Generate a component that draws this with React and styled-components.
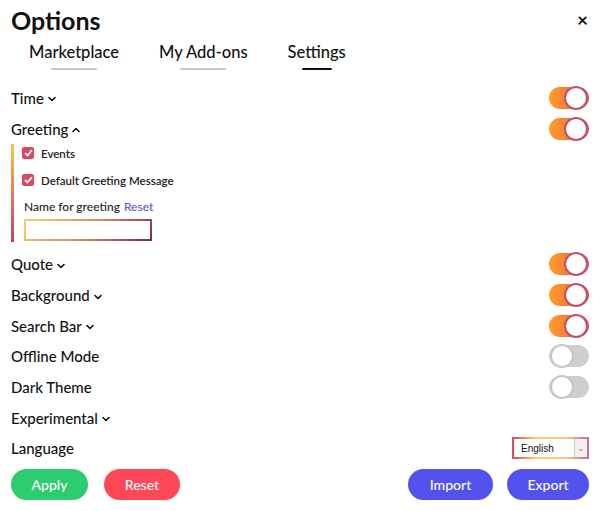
import React from "react";
import styled, { createGlobalStyle } from "styled-components";

const Global = createGlobalStyle`
  html, body { margin: 0; padding: 0; background: #fff; }
  body { font-family: Lato, "Noto Sans", sans-serif; color: #111; }
  * { box-sizing: border-box; }
`;

const Page = styled.div`
  width: 600px;
  height: 511px;
  padding: 0 11px;
  display: flex;
  flex-direction: column;
`;

const Header = styled.div`
  display: flex;
  justify-content: space-between;
  align-items: center;
  height: 38px;
  padding-top: 1px;
`;

const Title = styled.h1`
  margin: 0;
  font-size: 25px;
  font-weight: 700;
`;

const Close = styled.span`
  font-size: 19px;
  font-weight: 700;
  margin-right: 1px;
  line-height: 1;
`;

const Tabs = styled.div`
  display: flex;
  gap: 40px;
  padding-left: 18px;
  height: 44px;
`;

const Tab = styled.div`
  display: flex;
  flex-direction: column;
  align-items: center;
  font-size: 16.5px;
  font-weight: 500;
  padding-top: 4px;
  &::after {
    content: "";
    display: block;
    margin-top: 6px;
    height: 2px;
    border-radius: 1px;
    width: ${(p) => (p.$active ? "30px" : "46px")};
    background: ${(p) => (p.$active ? "#111" : "#c8c8c8")};
  }
`;

const Row = styled.div`
  display: flex;
  align-items: center;
  justify-content: space-between;
  height: ${(p) => p.$h || 31}px;
`;

const Label = styled.div`
  display: flex;
  align-items: center;
  gap: 4px;
  font-size: 15px;
  font-weight: 500;
`;

const Toggle = styled.div`
  width: 40px;
  height: 22px;
  border-radius: 11px;
  padding: 0 1px;
  display: flex;
  align-items: center;
  justify-content: ${(p) => (p.$on ? "flex-end" : "flex-start")};
  background: ${(p) =>
    p.$on ? "linear-gradient(90deg, #ff9d2a, #f1763c 60%, #d05a62)" : "#cfcfcf"};
  &::after {
    content: "";
    width: 20px;
    height: 20px;
    border-radius: 50%;
    background: #fff;
    border: 2px solid ${(p) => (p.$on ? "#c24f6c" : "#c6c6c6")};
  }
`;

const Section = styled.div`
  border-left: 3px solid;
  border-image: linear-gradient(180deg, #f4c84a, #e37d58 50%, #c2416b) 1;
  padding: 0 0 1px 8px;
  margin-bottom: 7px;
  display: flex;
  flex-direction: column;
`;

const CheckRow = styled.label`
  display: flex;
  align-items: center;
  gap: 7px;
  height: 18px;
  margin-bottom: ${(p) => p.$mb || 0}px;
  font-size: 11.5px;
  font-weight: 600;
  color: #222;
`;

const Box = styled.span`
  width: 12px;
  height: 12px;
  border-radius: 2px;
  background: #e0475f;
  display: flex;
  align-items: center;
  justify-content: center;
`;

const FieldLabel = styled.div`
  margin-top: 9px;
  margin-left: 2px;
  font-size: 12px;
  font-weight: 500;
  color: #222;
  height: 16px;
  display: flex;
  align-items: center;
  gap: 4px;
`;

const LinkText = styled.span`
  color: #5b57d6;
`;

const Input = styled.div`
  margin: 5px 0 0 2px;
  width: 128px;
  height: 22px;
  border: 2px solid;
  border-image: linear-gradient(135deg, #f6d070, #d98a66 50%, #7c2a5a) 1;
`;

const Select = styled.div`
  width: 77px;
  height: 22px;
  border: 2px solid;
  border-image: linear-gradient(90deg, #e0475f, #f6d070 30%, #f6d070 70%, #c07090) 1;
  display: flex;
  align-items: center;
  font-size: 10px;
  font-family: "Liberation Sans", Arial, sans-serif;
  color: #111;
  background: #fff;
`;

const SelectText = styled.span`
  flex: 1;
  padding-left: 7px;
`;

const SelectArrow = styled.span`
  width: 13px;
  height: 100%;
  border-left: 1px solid #ccc;
  background: #f3eef0;
  color: #888;
  display: flex;
  align-items: center;
  justify-content: center;
  font-size: 9px;
`;

const Footer = styled.div`
  display: flex;
  justify-content: space-between;
  margin-top: 5px;
`;

const Group = styled.div`
  display: flex;
  gap: ${(p) => p.$gap}px;
`;

const Button = styled.button`
  width: ${(p) => p.$w}px;
  height: 31px;
  border: none;
  border-radius: 16px;
  background: ${(p) => p.$bg};
  color: #fff;
  font-family: inherit;
  font-size: 14px;
  font-weight: 500;
  padding: 0;
`;

const Chevron = ({ up }) => (
  <svg width="8" height="6" viewBox="0 0 8 6" style={{ marginTop: 3 }}>
    <path
      d={up ? "M1 4.5 L4 1.5 L7 4.5" : "M1 1.5 L4 4.5 L7 1.5"}
      fill="none"
      stroke="#111"
      strokeWidth="1.6"
      strokeLinecap="round"
      strokeLinejoin="round"
    />
  </svg>
);

const Check = () => (
  <svg width="9" height="8" viewBox="0 0 9 8">
    <path d="M1 4 L3.5 6.5 L8 1.2" fill="none" stroke="#fff" strokeWidth="1.8" />
  </svg>
);

export default function App() {
  const rows = [
    ["Quote", true, true],
    ["Background", true, true],
    ["Search Bar", true, true],
    ["Offline Mode", false, false],
    ["Dark Theme", false, false],
    ["Experimental", true, null],
  ];
  return (
    <Page>
      <Global />
      <Header>
        <Title>Options</Title>
        <Close>×</Close>
      </Header>
      <Tabs>
        <Tab>Marketplace</Tab>
        <Tab>My Add-ons</Tab>
        <Tab $active>Settings</Tab>
      </Tabs>
      <Row>
        <Label>
          Time <Chevron />
        </Label>
        <Toggle $on />
      </Row>
      <Row>
        <Label>
          Greeting <Chevron up />
        </Label>
        <Toggle $on />
      </Row>
      <Section>
        <CheckRow $mb={9}>
          <Box>
            <Check />
          </Box>
          Events
        </CheckRow>
        <CheckRow>
          <Box>
            <Check />
          </Box>
          Default Greeting Message
        </CheckRow>
        <FieldLabel>
          Name for greeting <LinkText>Reset</LinkText>
        </FieldLabel>
        <Input />
      </Section>
      {rows.map(([name, chev, on]) => (
        <Row key={name} $h={30.7}>
          <Label>
            {name} {chev && <Chevron />}
          </Label>
          {on !== null && <Toggle $on={on} />}
        </Row>
      ))}
      <Row $h={30.7}>
        <Label>Language</Label>
        <Select>
          <SelectText>English</SelectText>
          <SelectArrow>⌄</SelectArrow>
        </Select>
      </Row>
      <Footer>
        <Group $gap={16}>
          <Button $w={77} $bg="#2ecc71">Apply</Button>
          <Button $w={76} $bg="#ff4757">Reset</Button>
        </Group>
        <Group $gap={14}>
          <Button $w={85} $bg="#5352ed">Import</Button>
          <Button $w={82} $bg="#5352ed">Export</Button>
        </Group>
      </Footer>
    </Page>
  );
}
